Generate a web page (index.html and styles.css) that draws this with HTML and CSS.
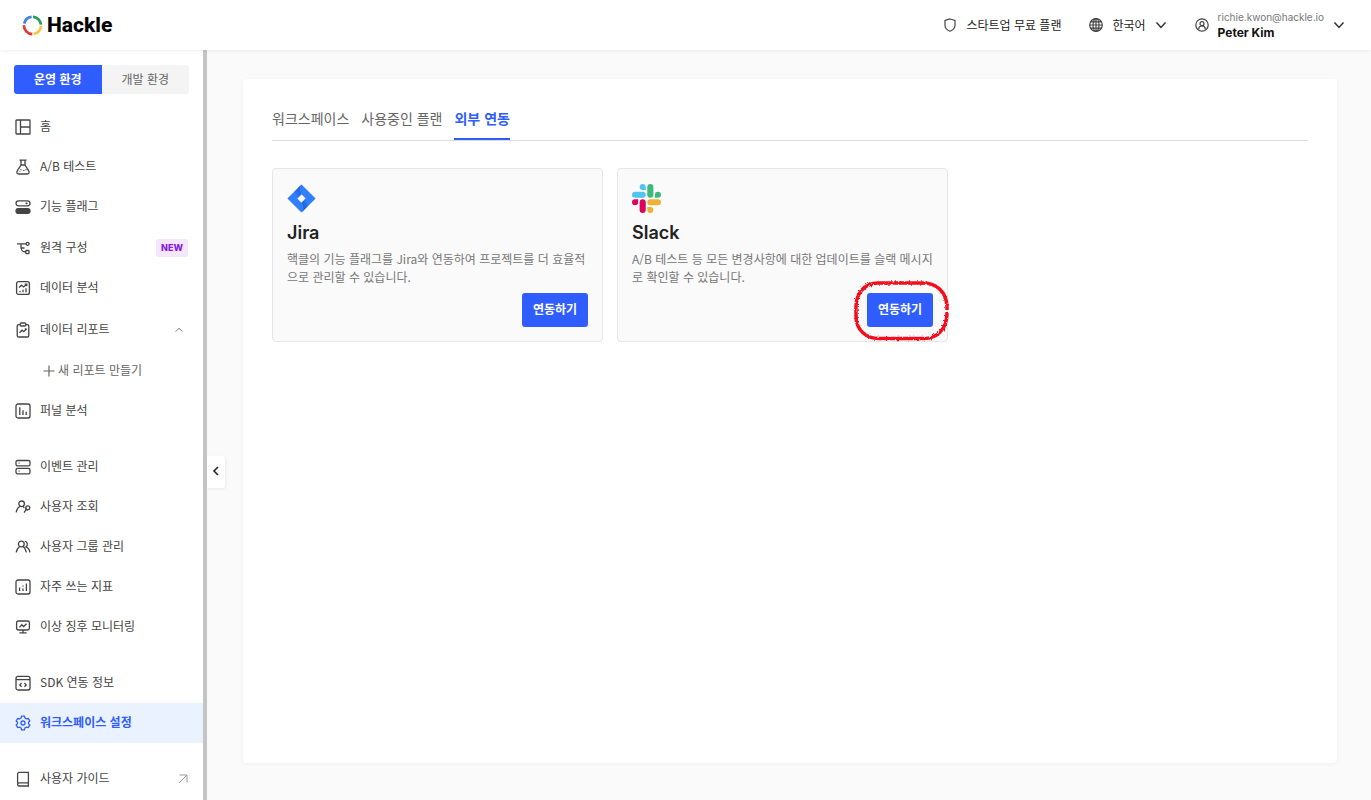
FILE: index.html
```html
<!DOCTYPE html>
<html lang="ko">
<head>
<meta charset="utf-8">
<meta name="viewport" content="width=device-width, initial-scale=1">
<title>Hackle</title>
<link rel="stylesheet" href="styles.css">
</head>
<body>
<header class="header">
  <a class="logo" href="#">
    <svg class="logo-mark" viewBox="0 0 20 20" fill="none" stroke-width="2.6">
      <path d="M2.1 8.2A8.2 8.2 0 0 1 9.2 1.8" stroke="#4a7ff0"/>
      <path d="M10.4 1.8A8.2 8.2 0 0 1 18.1 9.2" stroke="#2a9d5c"/>
      <path d="M18.2 10.4A8.2 8.2 0 0 1 11 18.1" stroke="#f8c63d"/>
      <path d="M9.8 18.2A8.2 8.2 0 0 1 1.9 9.6" stroke="#dc3c34"/>
    </svg>
    <span>Hackle</span>
  </a>
  <nav class="header-menu">
    <a class="plan" href="#">
      <svg class="icon-s" viewBox="0 0 14 14"><path d="M7 1 12 2.5V7.5C12 10.5 9.5 12.2 7 13.2 4.5 12.2 2 10.5 2 7.5V2.5Z"/></svg>
      <span>스타트업 무료 플랜</span>
    </a>
    <button class="language" type="button">
      <svg class="icon-s" viewBox="0 0 14 14"><circle cx="7" cy="7" r="6.3"/><ellipse cx="7" cy="7" rx="3" ry="6.3"/><path d="M7 .7V13.3M.7 7H13.3M1.6 3.9H12.4M1.6 10.1H12.4"/></svg>
      <span>한국어</span>
      <svg class="chevron" viewBox="0 0 12 12"><path d="M1.5 3.5 6 8.5 10.5 3.5"/></svg>
    </button>
    <button class="account" type="button">
      <svg class="icon-s" viewBox="0 0 14 14"><circle cx="7" cy="7" r="6.2"/><circle cx="7" cy="5.7" r="2"/><path d="M3.8 11.4V10.4C3.8 8.9 5 8 7 8S10.2 8.9 10.2 10.4V11.4"/></svg>
      <span class="account-text"><span class="email">richie.kwon@hackle.io</span><strong>Peter Kim</strong></span>
      <svg class="chevron" viewBox="0 0 12 12"><path d="M1.5 3.5 6 8.5 10.5 3.5"/></svg>
    </button>
  </nav>
</header>
<div class="body">
  <aside class="sidebar">
    <div class="env">
      <button class="env-on" type="button">운영 환경</button>
      <button type="button">개발 환경</button>
    </div>
    <nav class="menu">
      <div class="group">
        <a href="#"><svg class="icon" viewBox="0 0 16 16"><rect x="1" y="1" width="14" height="14" rx=".6"/><path d="M5.5 1V15M5.5 8H15"/></svg><span>홈</span></a>
        <a href="#"><svg class="icon" viewBox="0 0 16 16"><path d="M4.5 1.2H11.5M6 1.2V6L2.4 11.7C1.2 13.6 2 15 3.8 15H12.2C14 15 14.8 13.6 13.6 11.7L10 6V1.2M5.8 6H10.2"/><path d="M6 10.2V11.2M8.8 11V12M11 10.2V11.2M5 12V12.6"/></svg><span>A/B 테스트</span></a>
        <a href="#"><svg class="icon" viewBox="0 0 16 16"><rect x="1" y="1.8" width="14" height="5" rx="2.5"/><path d="M10.5 4.3H12.5M11.5 3.4V5.2"/><rect class="solid" x="1" y="9.6" width="14" height="4.8" rx="2.3"/></svg><span>기능 플래그</span></a>
        <a class="tall" href="#"><svg class="icon" viewBox="0 0 16 16"><path d="M2 3.8H11M6 3.8V7C6 10.5 7 12 11 12M6 8H9.5"/><circle cx="12.6" cy="3.8" r="1.5"/><rect x="10.8" y="10.5" width="3.2" height="3.2" rx=".6"/></svg><span>원격 구성</span><em class="badge">NEW</em></a>
        <a href="#"><svg class="icon" viewBox="0 0 16 16"><rect x="1.6" y="1.6" width="12.8" height="12.8" rx="2"/><path d="M4 7.6 6.6 5.2 8.6 7 11.8 4.2M9.7 4.2H11.8V6.2M5 11V12.2M8 9.8V12.2M11 8.2V12.2"/></svg><span>데이터 분석</span></a>
        <a class="parent" href="#"><svg class="icon" viewBox="0 0 16 16"><path d="M5.5 2.6H3.8A1.6 1.6 0 0 0 2.2 4.2V13.4A1.6 1.6 0 0 0 3.8 15H12.2A1.6 1.6 0 0 0 13.8 13.4V4.2A1.6 1.6 0 0 0 12.2 2.6H10.5"/><rect x="5.2" y="1" width="5.6" height="3" rx="1"/><path d="M4.5 10.8 7 8.2 8.8 9.7 11.6 6.8M9.8 6.8H11.6"/></svg><span>데이터 리포트</span><svg class="fold" viewBox="0 0 10 10"><path d="M1.5 6.5 5 3.2 8.5 6.5"/></svg></a>
        <a class="sub" href="#"><svg class="plus" viewBox="0 0 12 12"><path d="M6 .5V11.5M.5 6H11.5"/></svg><span>새 리포트 만들기</span></a>
        <a href="#"><svg class="icon" viewBox="0 0 16 16"><rect x="1" y="1" width="14" height="14" rx="2"/><path d="M4.8 4.2V12M8 7.2V12M11.2 8.8V12"/></svg><span>퍼널 분석</span></a>
      </div>
      <div class="group">
        <a href="#"><svg class="icon" viewBox="0 0 16 16"><rect x="1" y="1.5" width="14" height="5.4" rx="1.6"/><rect x="1" y="9.4" width="14" height="5.4" rx="1.6"/><path d="M3.6 4.2H4.6M3.6 12.1H4.6"/></svg><span>이벤트 관리</span></a>
        <a href="#"><svg class="icon" viewBox="0 0 16 16"><circle cx="6.6" cy="4.8" r="2.8"/><path d="M1.2 13.4C1.6 10.4 3 8.4 5 7.2M8.2 7.2 9.2 9"/><circle cx="12.8" cy="8.8" r="2"/><path d="M10.9 8.6V10.8H12.8M10.9 10.8 9 13.6"/></svg><span>사용자 조회</span></a>
        <a href="#"><svg class="icon" viewBox="0 0 16 16"><circle cx="6.3" cy="5" r="2.9"/><path d="M1.2 13.4C1.6 10.9 2.8 8.800 4.6 7.400M8 7.400C10 8.800 11 10.900 11.400 13.400M9.800 2.200C12.600 2.600 13.200 6.400 11 7.800 13.300 8.800 14.600 10.600 14.800 13.400"/></svg><span>사용자 그룹 관리</span></a>
        <a href="#"><svg class="icon" viewBox="0 0 16 16"><rect x="1" y="1" width="14" height="14" rx="2"/><path d="M4.6 8.6V12M8 9.4V12M8 6.4V7.4M11.4 4.6V12"/></svg><span>자주 쓰는 지표</span></a>
        <a href="#"><svg class="icon" viewBox="0 0 16 16"><rect x="1.6" y="2" width="12.8" height="9" rx="1.8"/><path d="M4.4 8.4 6.8 5.8 8.6 7.6 11.6 4.8M8 11V13.8M4.4 13.8H11.6"/></svg><span>이상 징후 모니터링</span></a>
      </div>
      <div class="group">
        <a href="#"><svg class="icon" viewBox="0 0 16 16"><rect x="1" y="1.4" width="14" height="13.6" rx="2"/><path d="M1 4.6H15M6.6 8 4.8 9.9 6.6 11.8M9.4 8 11.2 9.9 9.4 11.8"/></svg><span>SDK 연동 정보</span></a>
        <a class="current" href="#"><svg class="icon" viewBox="0 0 16 16"><circle cx="8" cy="8" r="2"/><path d="M6.6 1.2H9.4L10 3.1 11.4 3.9 13.3 3.5 14.8 6 13.5 7.3V8.8L14.8 10.1 13.3 12.6 11.4 12.1 10 12.9 9.4 14.8H6.6L6 12.9 4.6 12.1 2.7 12.6 1.2 10.1 2.5 8.8V7.3L1.2 6 2.7 3.5 4.6 3.9 6 3.1Z"/></svg><span>워크스페이스 설정</span></a>
      </div>
      <div class="group">
        <a href="#"><svg class="icon" viewBox="0 0 16 16"><path d="M2.6 12.6V3A1.6 1.6 0 0 1 4.2 1.4H13.4V15H4.2A1.6 1.6 0 0 1 2.6 13.4C2.6 12.4 3.4 11.8 4.2 11.8H13.4"/></svg><span>사용자 가이드</span><svg class="external" viewBox="0 0 10 10"><path d="M1 9 9 1M1.5 1H9V8.5"/></svg></a>
      </div>
    </nav>
  </aside>
  <main class="main">
    <button class="collapse" type="button" aria-label="메뉴 접기"><svg viewBox="0 0 8 10"><path d="M6 1 2 5 6 9"/></svg></button>
    <section class="panel">
      <nav class="tabs">
        <a href="#">워크스페이스</a>
        <a href="#">사용중인 플랜</a>
        <a class="tab-on" href="#">외부 연동</a>
      </nav>
      <div class="cards">
        <article class="card">
          <svg class="brand" viewBox="0 0 29 29">
            <defs>
              <linearGradient id="j1" x1="1" y1="0" x2="0" y2="1"><stop offset=".1" stop-color="#1d4fc4"/><stop offset=".8" stop-color="#2d7dff"/></linearGradient>
              <linearGradient id="j2" x1="0" y1="1" x2="1" y2="0"><stop offset=".1" stop-color="#1d4fc4"/><stop offset=".8" stop-color="#2d7dff"/></linearGradient>
            </defs>
            <path fill="#2f7fff" d="M14.5.5 28.6 14.5 14.5 28.5.4 14.5ZM14.5 10.3 10.3 14.5 14.5 18.7 18.7 14.5Z" fill-rule="evenodd"/>
            <path fill="url(#j1)" d="M14.5 10.3 10.3 14.5 7.6 7.4 14.5.5C11.8 3.4 12 7.6 14.5 10.3Z"/>
            <path fill="url(#j2)" d="M14.5 28.5C17.2 25.6 17 21.4 14.5 18.7L18.7 14.5 21.4 21.6Z"/>
          </svg>
          <h2>Jira</h2>
          <p>핵클의 기능 플래그를 Jira와 연동하여 프로젝트를 더 효율적으로 관리할 수 있습니다.</p>
          <div class="action"><button class="primary" type="button">연동하기</button></div>
        </article>
        <article class="card">
          <svg class="brand" viewBox="0 0 122.8 122.8">
            <path fill="#d9045c" d="M25.8 77.6a12.9 12.9 0 1 1-12.9-12.9h12.9zM32.3 77.6a12.9 12.9 0 0 1 25.8 0v32.3a12.9 12.9 0 0 1-25.8 0z"/>
            <path fill="#4fc4ef" d="M45.2 25.8a12.9 12.9 0 1 1 12.9-12.9v12.9zM45.2 32.3a12.9 12.9 0 0 1 0 25.8H12.9a12.9 12.9 0 0 1 0-25.8z"/>
            <path fill="#3fb87e" d="M97 45.2a12.9 12.9 0 1 1 12.9 12.9H97zM90.5 45.2a12.9 12.9 0 0 1-25.8 0V12.9a12.9 12.9 0 0 1 25.8 0z"/>
            <path fill="#eab336" d="M77.6 97a12.9 12.9 0 1 1-12.9 12.9V97zM77.6 90.5a12.9 12.9 0 0 1 0-25.8h32.3a12.9 12.9 0 0 1 0 25.8z"/>
          </svg>
          <h2>Slack</h2>
          <p>A/B 테스트 등 모든 변경사항에 대한 업데이트를 슬랙 메시지로 확인할 수 있습니다.</p>
          <div class="action"><button class="primary" type="button">연동하기</button>
            <svg class="marker" viewBox="0 0 96 62">
              <defs><filter id="rough" x="-5%" y="-5%" width="110%" height="110%"><feTurbulence type="fractalNoise" baseFrequency=".45" numOctaves="2" seed="4"/><feDisplacementMap in="SourceGraphic" scale="3"/></filter></defs>
              <path filter="url(#rough)" d="M94 30V26C93 12 84 3 70 3H25C11 3 3 14 3 27V36C3 50 13 58.500 26 58.500H71C85 58.500 94 48 94 33V32"/>
            </svg>
          </div>
        </article>
      </div>
    </section>
  </main>
</div>
</body>
</html>
```
FILE: styles.css
```css
* { box-sizing: border-box; }
body {
  margin: 0;
  min-height: 100vh;
  display: flex;
  flex-direction: column;
  font: 12px/18px "Noto Sans CJK KR", sans-serif;
  color: #444;
  background: #fafafa;
}
a { color: inherit; text-decoration: none; }
button { font: inherit; color: inherit; border: 0; padding: 0; background: none; cursor: pointer; }
svg { flex: none; fill: none; stroke: currentColor; }

.header {
  position: relative;
  display: flex;
  justify-content: space-between;
  align-items: center;
  height: 50px;
  padding: 0 26px 0 22px;
  background: #fff;
  box-shadow: 0 1px 4px rgba(0, 0, 0, .07);
}
.logo { display: flex; align-items: center; gap: 4px; color: #000; font: 800 21px/24px Roboto, sans-serif; }
.logo-mark { width: 21px; height: 21px; }
.header-menu { display: flex; align-items: center; color: #222; }
.plan, .language, .account { display: flex; align-items: center; }
.plan { gap: 9px; margin-right: 28px; }
.language { gap: 9px; margin-right: 28px; }
.account { gap: 9px; }
.header-menu span { padding-bottom: 1px; }
.icon-s { width: 14px; height: 14px; stroke: #444; stroke-width: 1.2; }
.chevron { width: 12px; height: 12px; stroke: #333; stroke-width: 1.5; }
.account-text { display: flex; flex-direction: column; text-align: left; font-family: Inter, sans-serif; line-height: 16px; }
.header-menu .email { padding: 0; font-size: 10px; color: #777; }
.account strong { font-weight: 700; color: #111; }

.body { flex: 1; display: flex; }
.sidebar { flex: none; width: 207px; border-right: 4px solid #c4c4c4; background: #fff; }
.env { display: flex; margin: 15px 14px 13px; border-radius: 3px; overflow: hidden; }
.env button { flex: 1; height: 29px; padding-bottom: 2px; background: #f4f4f4; color: #666; }
.env .env-on { background: #2f5dff; color: #fff; font-weight: 700; }
.menu { display: flex; flex-direction: column; gap: 16px; }
.menu a { display: flex; align-items: center; height: 40px; padding: 0 15px; }
.menu .tall { height: 41px; }
.menu .parent { height: 43px; }
.menu .icon { width: 16px; height: 16px; margin-right: 9px; stroke-width: 1.3; }
.solid { fill: currentColor; }
.menu span { padding-bottom: 2px; }
.menu .sub { padding-left: 43px; color: #666; }
.plus { width: 12px; height: 12px; margin-right: 3px; stroke-width: 1.2; }
.badge {
  margin-left: auto;
  padding: 0 5px;
  border-radius: 3px;
  background: #f3e6fd;
  color: #8a1be0;
  font-family: Inter, sans-serif;
  font-size: 9px;
  font-style: normal;
  font-weight: 800;
}
.fold { width: 10px; height: 10px; margin-left: auto; margin-right: 4px; color: #888; }
.external { width: 10px; height: 10px; margin-left: auto; color: #999; }
.menu .current { background: #eaf1ff; color: #2f5dff; font-weight: 700; }

.main { position: relative; flex: 1; display: flex; padding: 29px 34px 37px 36px; }
.collapse {
  position: absolute;
  top: 406px;
  left: 0;
  width: 18px;
  height: 32px;
  padding-bottom: 3px;
  border-radius: 0 3px 3px 0;
  background: #fff;
  box-shadow: 1px 1px 3px rgba(0, 0, 0, .06);
}
.collapse svg { width: 8px; height: 10px; stroke: #222; stroke-width: 1.6; }
.panel { flex: 1; padding: 29px; border-radius: 4px; background: #fff; box-shadow: 0 1px 4px rgba(0, 0, 0, .05); }
.tabs { display: flex; gap: 12px; border-bottom: 1px solid #ddd; font-size: 14px; line-height: 20px; color: #666; }
.tabs a { padding-bottom: 10px; border-bottom: 2px solid transparent; }
.tabs .tab-on { border-color: #2f5dff; color: #2f5dff; font-weight: 700; }
.cards { display: grid; grid-template-columns: repeat(3, 1fr); gap: 14px; margin-top: 27px; padding-right: 15px; }
.card { padding: 15px 14px 14px; border: 1px solid #e6e6e6; border-radius: 4px; background: #fafafa; }
.brand { display: block; width: 29px; height: 29px; stroke: none; }
h2 { margin: 9px 0 6px; font: 600 18px/22px Inter, sans-serif; color: #222; }
p { margin: 0 0 7px; color: #777; word-break: break-all; }
.action { position: relative; display: flex; justify-content: flex-end; }
.primary { width: 66px; height: 34px; padding-bottom: 2px; border-radius: 3px; background: #2f5dff; color: #fff; font-weight: 700; }
.marker { position: absolute; top: -13px; right: -16px; width: 96px; height: 62px; stroke: #f5101c; stroke-width: 3.5; pointer-events: none; }
```
